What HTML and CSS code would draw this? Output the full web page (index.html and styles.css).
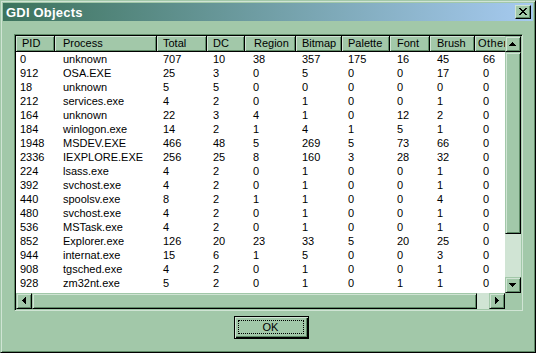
FILE: index.html
```html
<!DOCTYPE html>
<html>
<head>
<meta charset="utf-8">
<title>GDI Objects</title>
<link rel="stylesheet" href="styles.css">
</head>
<body>
<div class="window">
  <div class="titlebar">
    <span class="title">GDI Objects</span>
    <div class="close">
      <svg width="8" height="7" viewBox="0 0 8 7" shape-rendering="crispEdges"><path d="M0 0h2v1h-2zM6 0h2v1h-2zM1 1h2v1h-2zM5 1h2v1h-2zM2 2h4v1h-4zM3 3h2v1h-2zM2 4h4v1h-4zM1 5h2v1h-2zM5 5h2v1h-2zM0 6h2v1h-2zM6 6h2v1h-2z" fill="#000"/></svg>
    </div>
  </div>
  <div class="client">
    <div class="listview">
      <div class="lv-inner">
        <div class="lv-content">
          <div class="row header">
            <div class="c pid">PID</div><div class="c proc">Process</div><div class="c tot">Total</div><div class="c dc">DC</div><div class="c reg">Region</div><div class="c bmp">Bitmap</div><div class="c pal">Palette</div><div class="c fnt">Font</div><div class="c br">Brush</div><div class="c oth">Other</div>
          </div>
          <div class="row"><div class="c pid">0</div><div class="c proc">unknown</div><div class="c tot">707</div><div class="c dc">10</div><div class="c reg">38</div><div class="c bmp">357</div><div class="c pal">175</div><div class="c fnt">16</div><div class="c br">45</div><div class="c oth">66</div></div>
          <div class="row"><div class="c pid">912</div><div class="c proc">OSA.EXE</div><div class="c tot">25</div><div class="c dc">3</div><div class="c reg">0</div><div class="c bmp">5</div><div class="c pal">0</div><div class="c fnt">0</div><div class="c br">17</div><div class="c oth">0</div></div>
          <div class="row"><div class="c pid">18</div><div class="c proc">unknown</div><div class="c tot">5</div><div class="c dc">5</div><div class="c reg">0</div><div class="c bmp">0</div><div class="c pal">0</div><div class="c fnt">0</div><div class="c br">0</div><div class="c oth">0</div></div>
          <div class="row"><div class="c pid">212</div><div class="c proc">services.exe</div><div class="c tot">4</div><div class="c dc">2</div><div class="c reg">0</div><div class="c bmp">1</div><div class="c pal">0</div><div class="c fnt">0</div><div class="c br">1</div><div class="c oth">0</div></div>
          <div class="row"><div class="c pid">164</div><div class="c proc">unknown</div><div class="c tot">22</div><div class="c dc">3</div><div class="c reg">4</div><div class="c bmp">1</div><div class="c pal">0</div><div class="c fnt">12</div><div class="c br">2</div><div class="c oth">0</div></div>
          <div class="row"><div class="c pid">184</div><div class="c proc">winlogon.exe</div><div class="c tot">14</div><div class="c dc">2</div><div class="c reg">1</div><div class="c bmp">4</div><div class="c pal">1</div><div class="c fnt">5</div><div class="c br">1</div><div class="c oth">0</div></div>
          <div class="row"><div class="c pid">1948</div><div class="c proc">MSDEV.EXE</div><div class="c tot">466</div><div class="c dc">48</div><div class="c reg">5</div><div class="c bmp">269</div><div class="c pal">5</div><div class="c fnt">73</div><div class="c br">66</div><div class="c oth">0</div></div>
          <div class="row"><div class="c pid">2336</div><div class="c proc">IEXPLORE.EXE</div><div class="c tot">256</div><div class="c dc">25</div><div class="c reg">8</div><div class="c bmp">160</div><div class="c pal">3</div><div class="c fnt">28</div><div class="c br">32</div><div class="c oth">0</div></div>
          <div class="row"><div class="c pid">224</div><div class="c proc">lsass.exe</div><div class="c tot">4</div><div class="c dc">2</div><div class="c reg">0</div><div class="c bmp">1</div><div class="c pal">0</div><div class="c fnt">0</div><div class="c br">1</div><div class="c oth">0</div></div>
          <div class="row"><div class="c pid">392</div><div class="c proc">svchost.exe</div><div class="c tot">4</div><div class="c dc">2</div><div class="c reg">0</div><div class="c bmp">1</div><div class="c pal">0</div><div class="c fnt">0</div><div class="c br">1</div><div class="c oth">0</div></div>
          <div class="row"><div class="c pid">440</div><div class="c proc">spoolsv.exe</div><div class="c tot">8</div><div class="c dc">2</div><div class="c reg">1</div><div class="c bmp">1</div><div class="c pal">0</div><div class="c fnt">0</div><div class="c br">4</div><div class="c oth">0</div></div>
          <div class="row"><div class="c pid">480</div><div class="c proc">svchost.exe</div><div class="c tot">4</div><div class="c dc">2</div><div class="c reg">0</div><div class="c bmp">1</div><div class="c pal">0</div><div class="c fnt">0</div><div class="c br">1</div><div class="c oth">0</div></div>
          <div class="row"><div class="c pid">536</div><div class="c proc">MSTask.exe</div><div class="c tot">4</div><div class="c dc">2</div><div class="c reg">0</div><div class="c bmp">1</div><div class="c pal">0</div><div class="c fnt">0</div><div class="c br">1</div><div class="c oth">0</div></div>
          <div class="row"><div class="c pid">852</div><div class="c proc">Explorer.exe</div><div class="c tot">126</div><div class="c dc">20</div><div class="c reg">23</div><div class="c bmp">33</div><div class="c pal">5</div><div class="c fnt">20</div><div class="c br">25</div><div class="c oth">0</div></div>
          <div class="row"><div class="c pid">944</div><div class="c proc">internat.exe</div><div class="c tot">15</div><div class="c dc">6</div><div class="c reg">1</div><div class="c bmp">5</div><div class="c pal">0</div><div class="c fnt">0</div><div class="c br">3</div><div class="c oth">0</div></div>
          <div class="row"><div class="c pid">908</div><div class="c proc">tgsched.exe</div><div class="c tot">4</div><div class="c dc">2</div><div class="c reg">0</div><div class="c bmp">1</div><div class="c pal">0</div><div class="c fnt">0</div><div class="c br">1</div><div class="c oth">0</div></div>
          <div class="row"><div class="c pid">928</div><div class="c proc">zm32nt.exe</div><div class="c tot">5</div><div class="c dc">2</div><div class="c reg">0</div><div class="c bmp">1</div><div class="c pal">0</div><div class="c fnt">1</div><div class="c br">1</div><div class="c oth">0</div></div>
          <div class="row"><div class="c pid">1088</div><div class="c proc">hidisplay.Pl</div><div class="c tot">4</div><div class="c dc">2</div><div class="c reg">0</div><div class="c bmp">1</div><div class="c pal">0</div><div class="c fnt">0</div><div class="c br">1</div><div class="c oth">0</div></div>
        </div>
        <div class="vscroll">
          <div class="sbtn"><svg width="7" height="4" viewBox="0 0 7 4" shape-rendering="crispEdges"><path d="M3 0h1v1h-1zM2 1h3v1h-3zM1 2h5v1h-5zM0 3h7v1h-7z" fill="#000"/></svg></div>
          <div class="thumb vthumb"></div>
          <div class="track"></div>
          <div class="sbtn"><svg width="7" height="4" viewBox="0 0 7 4" shape-rendering="crispEdges"><path d="M0 0h7v1h-7zM1 1h5v1h-5zM2 2h3v1h-3zM3 3h1v1h-1z" fill="#000"/></svg></div>
        </div>
        <div class="hscroll">
          <div class="sbtn"><svg width="4" height="7" viewBox="0 0 4 7" shape-rendering="crispEdges"><path d="M0 3h1v1h-1zM1 2h1v3h-1zM2 1h1v5h-1zM3 0h1v7h-1z" fill="#000"/></svg></div>
          <div class="thumb hthumb"></div>
          <div class="track"></div>
          <div class="sbtn"><svg width="4" height="7" viewBox="0 0 4 7" shape-rendering="crispEdges"><path d="M0 0h1v7h-1zM1 1h1v5h-1zM2 2h1v3h-1zM3 3h1v1h-1z" fill="#000"/></svg></div>
        </div>
        <div class="corner"></div>
      </div>
    </div>
    <div class="footer">
      <div class="okbtn"><span class="focus">OK</span></div>
    </div>
  </div>
</div>
</body>
</html>
```
FILE: styles.css
```css
* { box-sizing: border-box; }
html, body { margin: 0; padding: 0; }
body {
  font-family: "Liberation Sans", Arial, sans-serif;
  font-size: 11px;
  background: #a2c8a9;
}
.window {
  width: 536px;
  height: 353px;
  background: #a2c8a9;
  border: 1px solid;
  border-color: #a2c8a9 #000 #000 #a2c8a9;
  box-shadow: inset 1px 1px #d0e4d4, inset -1px -1px #5e8a66;
  padding: 2px;
  display: flex;
  flex-direction: column;
}
.titlebar {
  height: 18px;
  flex: none;
  display: flex;
  align-items: center;
  padding: 0 2px 0 3px;
  background: linear-gradient(to right, #3c735c, #a6caf0);
}
.title {
  color: #fff;
  font-weight: bold;
  font-size: 13px;
  letter-spacing: 0.2px;
}
.close {
  margin-left: auto;
  width: 16px;
  height: 14px;
  background: #a2c8a9;
  border: 1px solid;
  border-color: #d0e4d4 #000 #000 #d0e4d4;
  box-shadow: inset -1px -1px #5e8a66;
  display: flex;
  align-items: center;
  justify-content: center;
  padding: 0 1px 1px 0;
}
.close svg { display: block; }
.client {
  flex: 1;
  display: flex;
  flex-direction: column;
  padding: 13px 10px 0 11px;
}
.listview {
  height: 277px;
  border: 1px solid;
  border-color: #5e8a66 #d0e4d4 #d0e4d4 #5e8a66;
  box-shadow: inset 1px 1px #000, inset -1px -1px #a2c8a9;
  padding: 1px;
}
.lv-inner {
  height: 100%;
  display: grid;
  grid-template-columns: 1fr 16px;
  grid-template-rows: 1fr 16px;
  background: #fff;
}
.lv-content {
  overflow: hidden;
  background: #fff;
  color: #000;
}
.row {
  display: grid;
  grid-template-columns: 39px 102px 50px 38px 51px 46px 48px 40px 45px 60px;
  height: 14px;
  line-height: 14px;
  white-space: nowrap;
}
.c { overflow: hidden; padding-left: 6px; }
.row .pid { padding-left: 4px; }
.proc { padding-left: 8px; }
.reg { padding-left: 8px; }
.fnt { padding-left: 7px; }
.br { padding-left: 7px; }
.oth { padding-left: 8px; }
.row.header { height: 16px; line-height: 15px; }
.header .c {
  background: #a2c8a9;
  border-right: 1px solid #000;
  border-bottom: 1px solid #000;
  box-shadow: inset 1px 1px #d0e4d4, inset -1px -1px #5e8a66;
}
.header .pid { padding-left: 6px; }
.header .reg { padding-left: 9px; }
.header .oth { padding-left: 3px; letter-spacing: 0.4px; }
.vscroll, .hscroll {
  display: flex;
  background: #d0e4d4;
}
.vscroll { flex-direction: column; }
.sbtn, .thumb {
  background: #a2c8a9;
  border: 1px solid;
  border-color: #a2c8a9 #000 #000 #a2c8a9;
  box-shadow: inset 1px 1px #d0e4d4, inset -1px -1px #5e8a66;
}
.sbtn {
  width: 16px;
  height: 16px;
  flex: none;
  display: flex;
  align-items: center;
  justify-content: center;
  padding: 0 1px 1px 0;
}
.sbtn svg { display: block; }
.vthumb { height: 182px; flex: none; }
.hthumb { width: 445px; flex: none; }
.track { flex: 1; }
.corner { background: #a2c8a9; }
.footer {
  display: flex;
  justify-content: center;
  padding-left: 5px;
  margin-top: 5px;
}
.okbtn {
  width: 75px;
  height: 23px;
  border: 1px solid #000;
  background: #a2c8a9;
  box-shadow: inset 1px 1px #d0e4d4, inset -1px -1px #000, inset -2px -2px #5e8a66;
  padding: 3px 4px 4px 3px;
  display: flex;
}
.focus {
  flex: 1;
  border: 1px dotted #000;
  display: flex;
  align-items: center;
  justify-content: center;
  font-size: 11px;
  color: #000;
}
```
